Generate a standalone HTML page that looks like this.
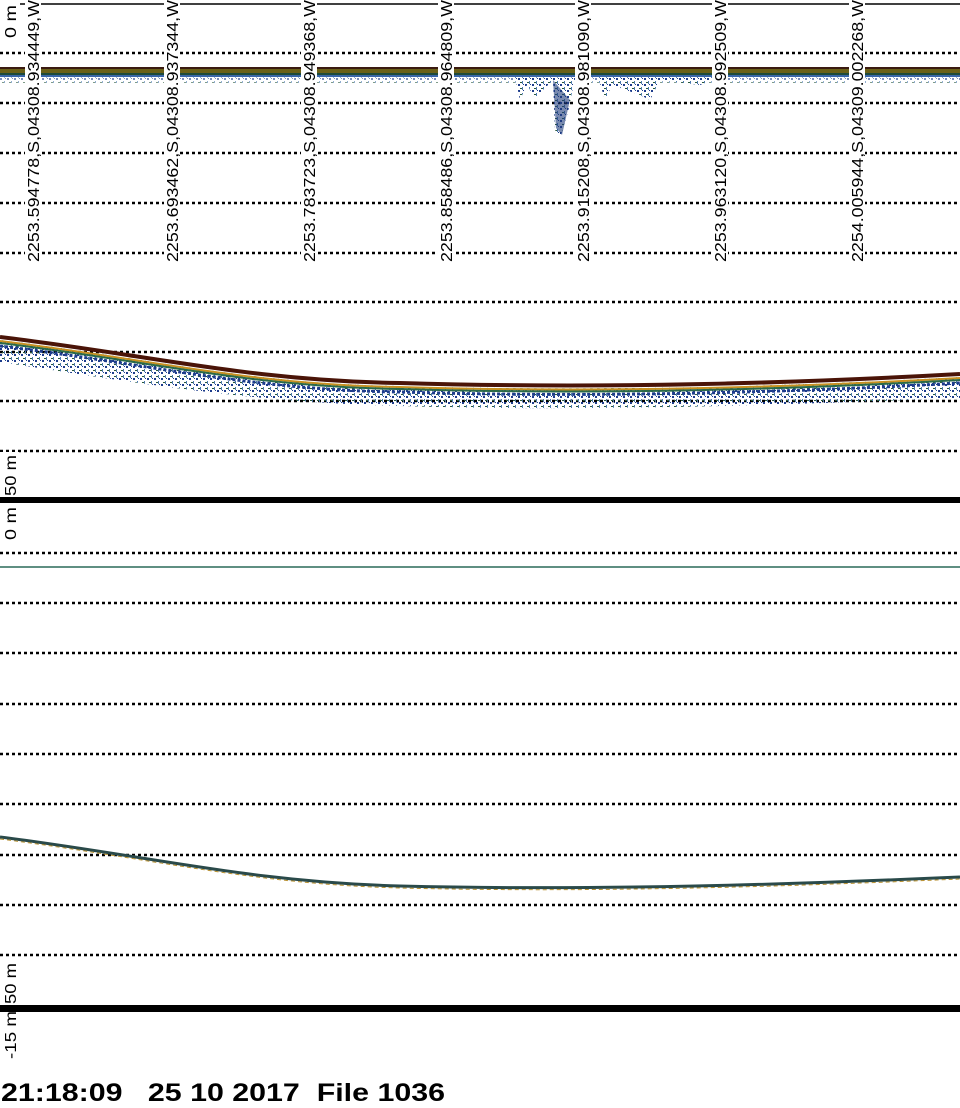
<!DOCTYPE html>
<html><head><meta charset="utf-8"><style>
html,body{margin:0;padding:0;background:#fff;width:960px;height:1108px;overflow:hidden}
svg{display:block}
text{font-family:"Liberation Sans",sans-serif}
</style></head><body>
<svg width="960" height="1108" viewBox="0 0 960 1108" xmlns="http://www.w3.org/2000/svg">
<defs>
<pattern id="dsc" width="7" height="6" patternUnits="userSpaceOnUse">
<rect x="0" y="0" width="2" height="2" fill="#1d3c8c"/><rect x="4" y="3" width="1" height="3" fill="#4a78b0"/><rect x="2" y="4" width="2" height="1" fill="#2a5a3a"/><rect x="5" y="0" width="1" height="1" fill="#1d3c8c"/>
</pattern>
</defs>
<g stroke="#000" stroke-width="2.5" stroke-dasharray="3,3">
<line x1="0" y1="53" x2="960" y2="53"/><line x1="0" y1="103" x2="960" y2="103"/><line x1="0" y1="153" x2="960" y2="153"/><line x1="0" y1="203" x2="960" y2="203"/><line x1="0" y1="253" x2="960" y2="253"/><line x1="0" y1="302" x2="960" y2="302"/><line x1="0" y1="352" x2="960" y2="352"/><line x1="0" y1="401" x2="960" y2="401"/><line x1="0" y1="451" x2="960" y2="451"/>
<line x1="0" y1="553" x2="960" y2="553"/><line x1="0" y1="603" x2="960" y2="603"/><line x1="0" y1="653" x2="960" y2="653"/><line x1="0" y1="704" x2="960" y2="704"/><line x1="0" y1="754" x2="960" y2="754"/><line x1="0" y1="804" x2="960" y2="804"/><line x1="0" y1="855" x2="960" y2="855"/><line x1="0" y1="905" x2="960" y2="905"/><line x1="0" y1="955" x2="960" y2="955"/>
</g>
<line x1="20" y1="4" x2="960" y2="4" stroke="#000" stroke-width="1.5"/>
<rect x="0" y="497" width="960" height="6" fill="#000"/>
<rect x="0" y="1005" width="960" height="7" fill="#000"/>
<!-- surface band -->
<rect x="0" y="67" width="960" height="2" fill="#3a1a10"/>
<rect x="0" y="69" width="960" height="4" fill="#6a6018"/>
<rect x="0" y="73" width="960" height="2" fill="#1e4a3a"/>
<rect x="0" y="75" width="960" height="2" fill="#3a66a8"/>
<rect x="0" y="77" width="960" height="6" fill="url(#dsc)" opacity="0.6"/>
<path d="M515 77 L520 100 L527 85 L535 98 L553 80 L555 130 L560 138 L568 112 L575 78 Z" fill="url(#dsc)"/>
<path d="M598 77 L605 100 L612 85 L640 95 L650 100 L660 80 L700 85 L720 77 Z" fill="url(#dsc)"/>
<path d="M553 80 L556 128 L562 135 L570 100 Z" fill="#1e3a7a" opacity="0.6"/>
<!-- bottom panel 1 -->
<path d="M0 340 C150 358 250 384 400 386 C600 392 800 386 960 377 L960 398 C800 404 600 412 400 406 C250 402 150 385 0 362 Z" fill="url(#dsc)"/>
<path d="M0 337 C150 355 250 381 400 383 C600 389 800 383 960 374" fill="none" stroke="#4a1408" stroke-width="4"/>
<path d="M0 341 C150 359 250 385 400 387 C600 393 800 387 960 378" fill="none" stroke="#c89020" stroke-width="2"/>
<path d="M0 343 C150 361 250 387 400 389 C600 395 800 389 960 380" fill="none" stroke="#2a6a48" stroke-width="2"/>
<path d="M0 346 C150 364 250 390 400 392 C600 398 800 392 960 383" fill="none" stroke="#1d3c8c" stroke-width="3" stroke-dasharray="3,2"/>
<!-- panel 2 -->
<line x1="0" y1="567" x2="960" y2="567" stroke="#2a6a58" stroke-width="1.5"/>
<path d="M0 837 C150 856 250 882 400 886 C600 891 800 884 960 877" fill="none" stroke="#2a4a4a" stroke-width="3"/>
<path d="M0 839 C150 858 250 884 400 888 C600 893 800 886 960 879" fill="none" stroke="#b89030" stroke-width="1" stroke-dasharray="4,3"/>
<!-- vertical labels -->
<g fill="#fff">
<rect x="25" y="0" width="16" height="264"/><rect x="164" y="0" width="16" height="264"/><rect x="301" y="0" width="16" height="264"/><rect x="438" y="0" width="16" height="264"/><rect x="575" y="0" width="16" height="264"/><rect x="712" y="0" width="16" height="264"/><rect x="849" y="0" width="16" height="264"/>
</g>
<g font-size="16" fill="#000">
<text transform="translate(39,0) rotate(-90)" x="-262" y="0" textLength="262" lengthAdjust="spacingAndGlyphs">2253.594778,S,04308.934449,W</text>
<text transform="translate(178,0) rotate(-90)" x="-262" y="0" textLength="262" lengthAdjust="spacingAndGlyphs">2253.693462,S,04308.937344,W</text>
<text transform="translate(315,0) rotate(-90)" x="-262" y="0" textLength="262" lengthAdjust="spacingAndGlyphs">2253.783723,S,04308.949368,W</text>
<text transform="translate(452,0) rotate(-90)" x="-262" y="0" textLength="262" lengthAdjust="spacingAndGlyphs">2253.858486,S,04308.964809,W</text>
<text transform="translate(589,0) rotate(-90)" x="-262" y="0" textLength="262" lengthAdjust="spacingAndGlyphs">2253.915208,S,04308.981090,W</text>
<text transform="translate(726,0) rotate(-90)" x="-262" y="0" textLength="262" lengthAdjust="spacingAndGlyphs">2253.963120,S,04308.992509,W</text>
<text transform="translate(863,0) rotate(-90)" x="-262" y="0" textLength="262" lengthAdjust="spacingAndGlyphs">2254.005944,S,04309.002268,W</text>
</g>
<g fill="#000" font-size="16">
<rect x="0" y="0" width="19" height="44" fill="#fff"/>
<text transform="translate(16,0) rotate(-90)" x="-38" y="0" textLength="33" lengthAdjust="spacingAndGlyphs">0 m</text>
<rect x="0" y="452" width="19" height="45" fill="#fff"/>
<text transform="translate(16,0) rotate(-90)" x="-496" y="0" textLength="41" lengthAdjust="spacingAndGlyphs">50 m</text>
<rect x="0" y="503" width="19" height="44" fill="#fff"/>
<text transform="translate(16,0) rotate(-90)" x="-540" y="0" textLength="33" lengthAdjust="spacingAndGlyphs">0 m</text>
<rect x="0" y="957" width="19" height="48" fill="#fff"/>
<text transform="translate(16,0) rotate(-90)" x="-1004" y="0" textLength="41" lengthAdjust="spacingAndGlyphs">50 m</text>
<text transform="translate(16,0) rotate(-90)" x="-1059" y="0" textLength="48" lengthAdjust="spacingAndGlyphs">-15 m</text>
</g>
<text x="1" y="1101" font-size="25" font-weight="bold" fill="#000" xml:space="preserve" textLength="444" lengthAdjust="spacingAndGlyphs">21:18:09   25 10 2017  File 1036</text>
</svg>
</body></html>
